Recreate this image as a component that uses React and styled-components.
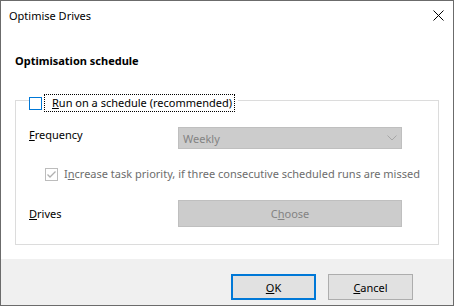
import styled, { createGlobalStyle } from "styled-components";

const GlobalStyle = createGlobalStyle`
  html, body {
    margin: 0;
    padding: 0;
    background: #ffffff;
  }
  body {
    font-family: "Segoe UI", "Noto Sans", "Liberation Sans", sans-serif;
    font-size: 11px;
    color: #000000;
    white-space: nowrap;
  }
`;

const Window = styled.div`
  width: 454px;
  height: 306px;
  box-sizing: border-box;
  border: 1px solid #6b6b6b;
  background: #ffffff;
  display: flex;
  flex-direction: column;
`;

const TitleBar = styled.div`
  height: 30px;
  display: flex;
  align-items: center;
  justify-content: space-between;
  padding: 0 9px 0 8px;
  line-height: 16px;
`;

const CloseIcon = styled.svg`
  width: 11px;
  height: 11px;
  display: block;
  margin-top: -1px;
`;

const Content = styled.div`
  flex: 1;
  padding: 22px 14px 0 14px;
`;

const Heading = styled.div`
  font-weight: bold;
  line-height: 16px;
  margin-bottom: 31px;
`;

const GroupBox = styled.div`
  border: 1px solid #dcdcdc;
  height: 143px;
  padding: 0 36px 0 13px;
`;

const Legend = styled.div`
  display: flex;
  align-items: center;
  width: fit-content;
  height: 18px;
  margin-top: -7px;
  background: #ffffff;
  padding-right: 3px;
`;

const CheckBox = styled.span`
  width: 13px;
  height: 13px;
  box-sizing: border-box;
  border: 1px solid ${(p) => (p.$disabled ? "#bcbcbc" : "#0078d7")};
  background: #ffffff;
  display: flex;
  align-items: center;
  justify-content: center;
  flex-shrink: 0;
`;

const FocusLabel = styled.span`
  margin-left: 2px;
  height: 18px;
  box-sizing: border-box;
  border: 1px dotted #000000;
  padding: 0 2px 0 7px;
  display: flex;
  align-items: center;
  line-height: 16px;
`;

const Row = styled.div`
  display: flex;
  align-items: ${(p) => p.$align || "center"};
  margin-top: ${(p) => p.$top}px;
  height: ${(p) => p.$height}px;
`;

const Label = styled.span`
  width: 149px;
  flex-shrink: 0;
  line-height: 16px;
`;

const Select = styled.div`
  flex: 1;
  height: 22px;
  box-sizing: border-box;
  background: #cccccc;
  border: 1px solid #bfbfbf;
  display: flex;
  align-items: center;
  justify-content: space-between;
  padding: 0 4px 0 4px;
  color: #838383;
`;

const SubCheck = styled.div`
  display: flex;
  align-items: center;
  padding-left: 16px;
  color: #6d6d6d;
`;

const SubText = styled.span`
  margin-left: 6px;
  line-height: 16px;
`;

const WideButton = styled.div`
  flex: 1;
  height: 27px;
  box-sizing: border-box;
  background: #cccccc;
  border: 1px solid #bfbfbf;
  display: flex;
  align-items: center;
  justify-content: center;
  color: #838383;
`;

const Footer = styled.div`
  height: 46px;
  background: #f0f0f0;
  display: flex;
  justify-content: flex-end;
  align-items: flex-start;
  gap: 12px;
  padding: 15px 40px 0 0;
  box-sizing: border-box;
`;

const Button = styled.div`
  width: 85px;
  height: 26px;
  box-sizing: border-box;
  background: #e1e1e1;
  border: ${(p) => (p.$default ? "2px solid #0078d7" : "1px solid #adadad")};
  display: flex;
  align-items: center;
  justify-content: center;
`;

const U = styled.span`
  text-decoration: underline;
`;

export default function App() {
  return (
    <>
      <GlobalStyle />
      <Window>
        <TitleBar>
          <span>Optimise Drives</span>
          <CloseIcon viewBox="0 0 11 11">
            <path d="M0.5 0.5 L10.5 10.5 M10.5 0.5 L0.5 10.5" stroke="#000" strokeWidth="1" />
          </CloseIcon>
        </TitleBar>
        <Content>
          <Heading>Optimisation schedule</Heading>
          <GroupBox>
            <Legend>
              <CheckBox />
              <FocusLabel>
                <span>
                  <U>R</U>un on a schedule (recommended)
                </span>
              </FocusLabel>
            </Legend>
            <Row $top={15} $height={22} $align="flex-start">
              <Label>
                <U>F</U>requency
              </Label>
              <Select>
                <span>Weekly</span>
                <svg width="10" height="6" viewBox="0 0 10 6">
                  <path d="M0.5 0.5 L5 5 L9.5 0.5" fill="none" stroke="#a6a6a6" strokeWidth="1" />
                </svg>
              </Select>
            </Row>
            <Row $top={16} $height={18}>
              <SubCheck>
                <CheckBox $disabled>
                  <svg width="11" height="11" viewBox="0 0 11 11">
                    <path d="M1.5 5.5 L4 8 L9.5 2.5" fill="none" stroke="#b0b0b0" strokeWidth="1.3" />
                  </svg>
                </CheckBox>
                <SubText>
                  I<U>n</U>crease task priority, if three consecutive scheduled runs are missed
                </SubText>
              </SubCheck>
            </Row>
            <Row $top={17} $height={27}>
              <Label>
                <U>D</U>rives
              </Label>
              <WideButton>
                <span>
                  C<U>h</U>oose
                </span>
              </WideButton>
            </Row>
          </GroupBox>
        </Content>
        <Footer>
          <Button $default>
            <span>
              <U>O</U>K
            </span>
          </Button>
          <Button>
            <span>
              <U>C</U>ancel
            </span>
          </Button>
        </Footer>
      </Window>
    </>
  );
}
